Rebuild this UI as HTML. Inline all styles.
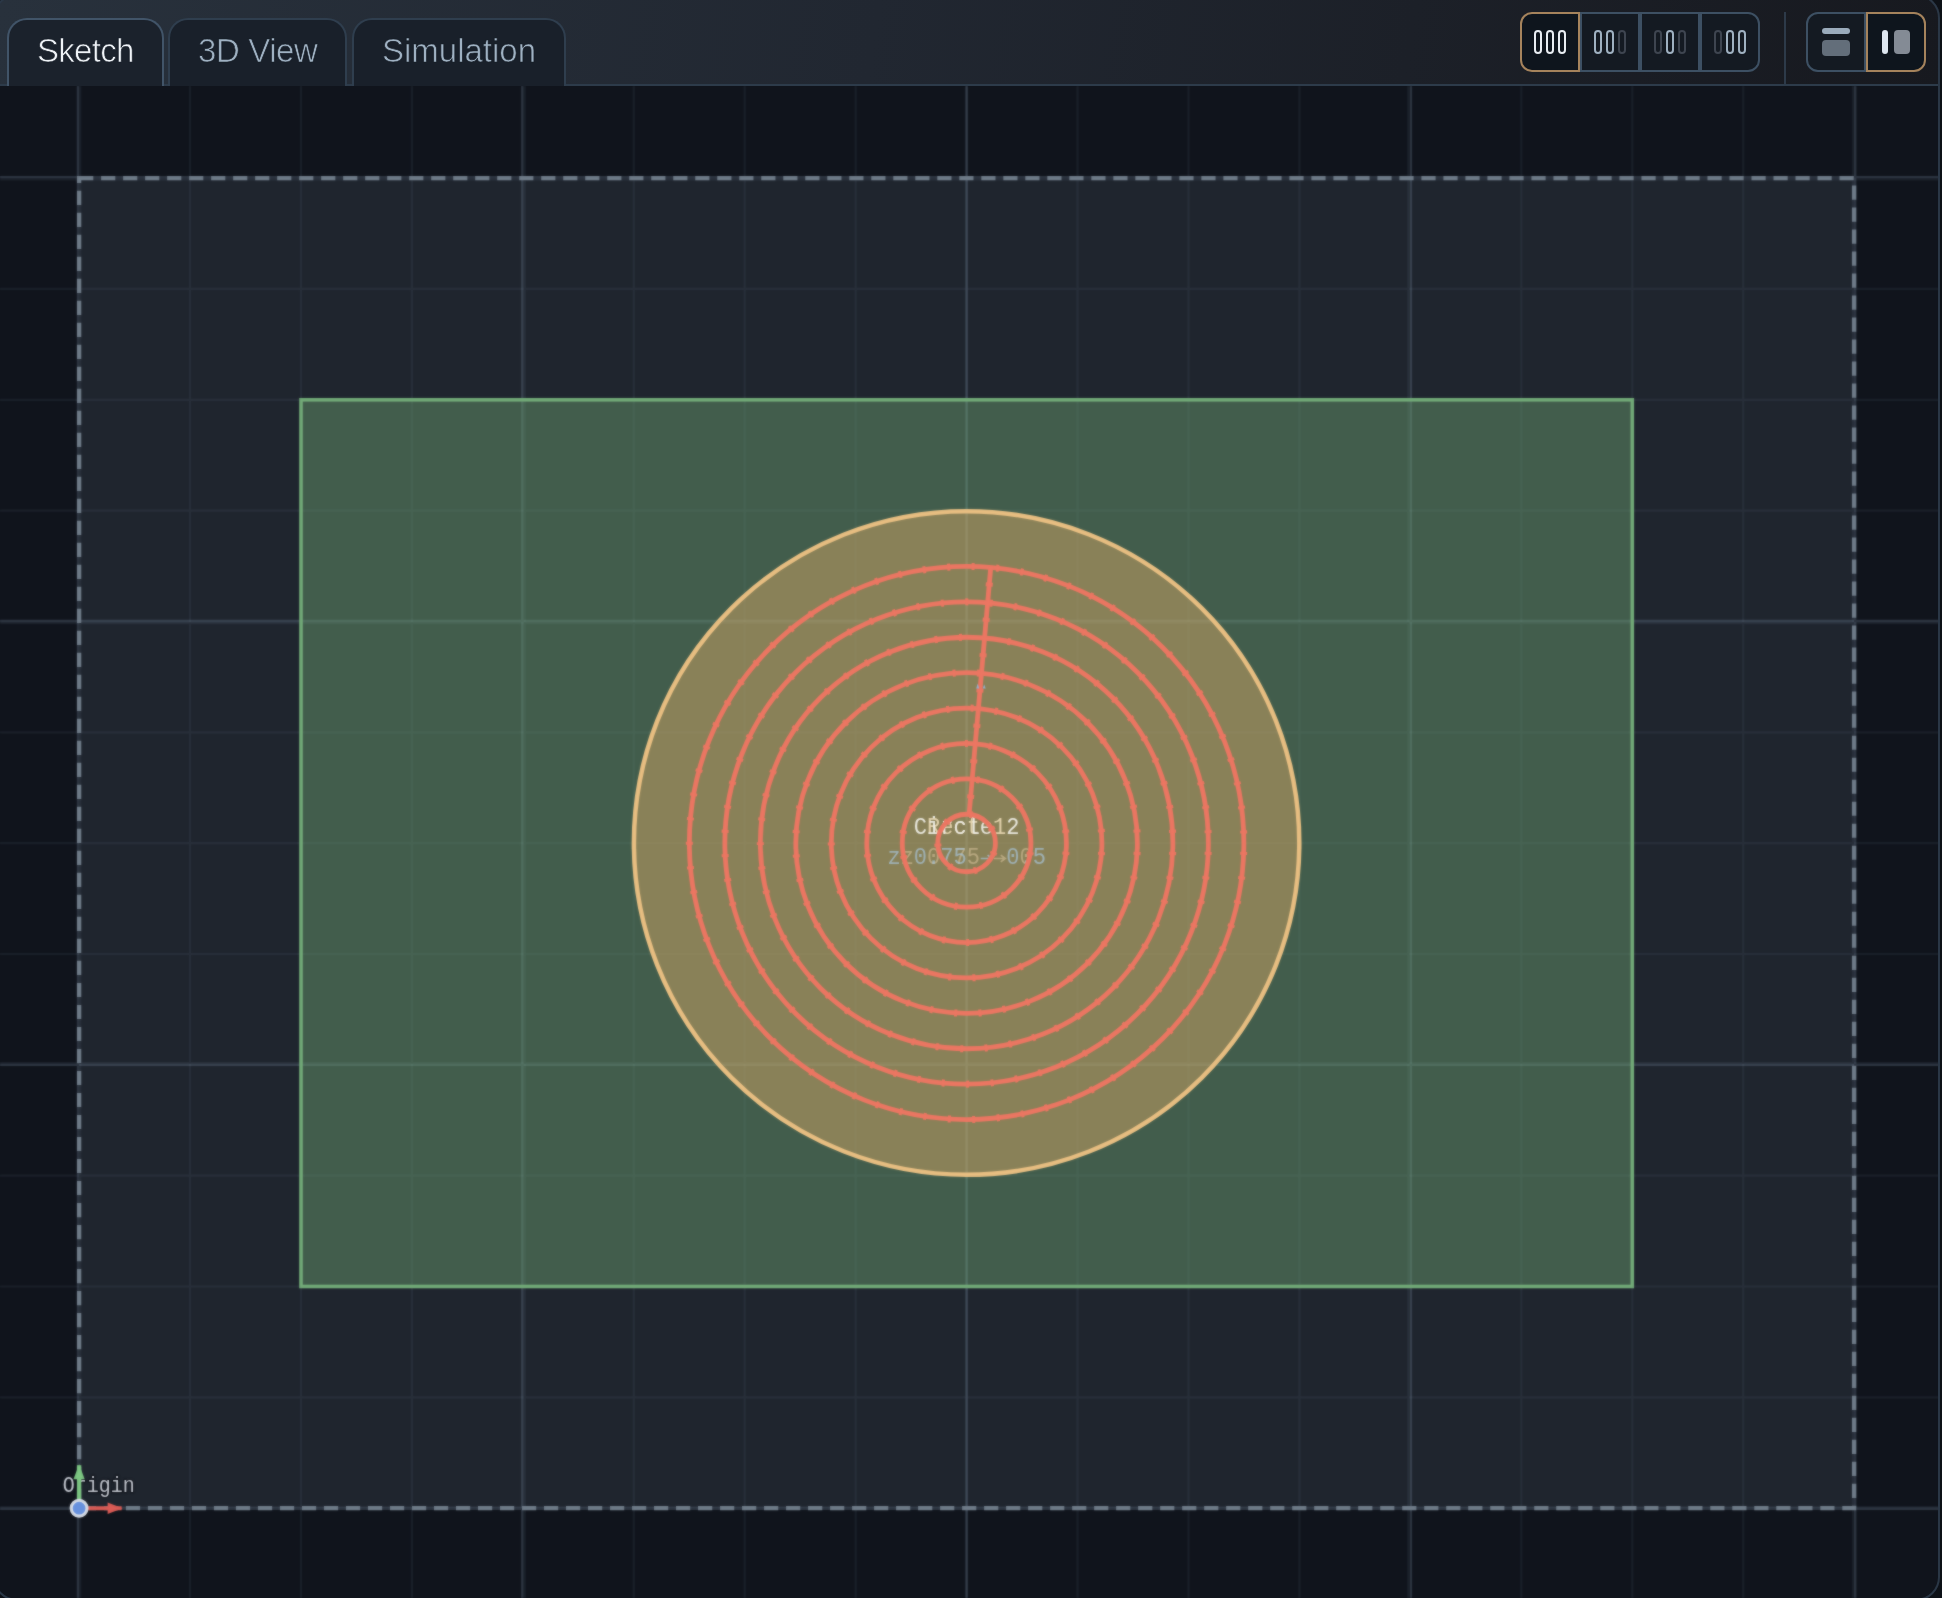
<!DOCTYPE html>
<html><head><meta charset="utf-8"><title>Sketch</title>
<style>
html,body{margin:0;padding:0;overflow:hidden;background:#10141c;}
#root{width:1942px;height:1598px;overflow:hidden;background:#10141c;font-family:"Liberation Sans",sans-serif;position:relative;}
#frame{position:absolute;left:-7px;top:-6px;width:1947px;height:1607px;box-sizing:border-box;border:2px solid #2a3746;border-radius:24px;box-shadow:0 0 0 30px #0d1117;pointer-events:none;z-index:9;}
#hdr{position:absolute;left:0;top:0;width:1940px;height:84px;background:linear-gradient(99deg,#28313c 0%,#212731 45%,#17191f 100%);border-bottom:2px solid #2d3b4a;}
#cv{position:absolute;left:0;top:86px;display:block;will-change:transform;}
.tab{position:absolute;top:18px;height:68px;box-sizing:border-box;border:2px solid #2f3e4e;border-bottom:none;border-radius:20px 20px 0 0;background:#19202a;color:#9eb0c1;font-size:33px;line-height:62px;text-align:center;white-space:nowrap;}
.tab span{display:inline-block;will-change:transform;-webkit-text-stroke:0.7px #19202a;}
.tab.act span{-webkit-text-stroke:0.7px #1b222c;}
.tab.act{border-color:#415468;background:#1b222c;color:#eef2f6;}
.grp{position:absolute;top:12px;height:60px;box-sizing:border-box;display:flex;}
.btn{width:60px;height:60px;box-sizing:border-box;border:2px solid #3d5063;background:#141a22;display:flex;align-items:center;justify-content:center;}
.btn.first{border-radius:12px 0 0 12px;}
.btn.last{border-radius:0 12px 12px 0;}
.btn.act{border-color:#a5835c;background:#0e151d;}
.sep{position:absolute;left:1784px;top:12px;width:2px;height:72px;background:#2d3a49;}
</style></head><body><div id="root">
<svg id="cv" width="1942" height="1512" viewBox="0 86 1942 1512"><defs><filter id="sf" x="-10" y="70" width="1962" height="1540" filterUnits="userSpaceOnUse" color-interpolation-filters="sRGB"><feGaussianBlur stdDeviation="0.9"/></filter></defs><rect x="0" y="86" width="1942" height="1512" fill="#10141c"/><defs><g id="c"><rect x="-20" y="66" width="1982" height="1552" fill="#10141c"/><rect x="79.1" y="178.1" width="1775.0" height="1330.1" fill="#1f252e"/><path d="M80.3 86V1598M190.0 86V1598M301.0 86V1598M411.9 86V1598M524.8 86V1598M633.8 86V1598M744.7 86V1598M855.7 86V1598M966.6 86V1598M1077.6 86V1598M1188.5 86V1598M1299.4 86V1598M1408.2 86V1598M1521.3 86V1598M1632.3 86V1598M1743.2 86V1598M1852.9 86V1598M0 179.3H1942M0 288.9H1942M0 399.8H1942M0 510.6H1942M0 623.1H1942M0 732.3H1942M0 843.1H1942M0 954.0H1942M0 1063.0H1942M0 1175.7H1942M0 1286.5H1942M0 1397.3H1942M0 1507.0H1942" stroke="#8fa3bd" stroke-opacity="0.085" stroke-width="2.2" fill="none"/><path d="M78.0 86V1598M522.3 86V1598M966.6 86V1598M1410.9 86V1598M1855.2 86V1598M0 177.1H1942M0 621.0H1942M0 1064.9H1942M0 1508.8H1942" stroke="#8fa3bd" stroke-opacity="0.23" stroke-width="2.4" fill="none"/><path d="M79.1 178.1H1854.1V1508.2H79.1Z" fill="none" stroke="#6f7c89" stroke-width="4.3" stroke-dasharray="14.2 7.805"/><rect x="77.1" y="176.1" width="4" height="4" fill="#6f7c89"/><rect x="301.0" y="399.8" width="1331.3" height="886.7" fill="#72ab78" fill-opacity="0.42" stroke="#72ab78" stroke-width="3.6"/><ellipse cx="966.6" cy="843.0" rx="332.7" ry="331.8" fill="#dfac69" fill-opacity="0.45" stroke="#e9bf82" stroke-width="4.5"/><g font-family="Liberation Mono, monospace"><text transform="scale(0.9167,1)" x="1011.3 1025.7 1040.1 1054.5 1083.3" y="833.7" font-size="24" fill="#ead9b4" fill-opacity="0.95">Rect1</text><text transform="scale(0.9167,1)" x="996.9 1011.3 1025.7 1040.1 1054.5 1068.9 1097.7" y="833.7" font-size="24" fill="#f1f0ea" fill-opacity="0.95">Circle2</text><path d="M993.9 858.5H1004.3M1000.8 855.1L1005.3 858.5L1000.8 861.9" fill="none" stroke="#cdbb93" stroke-opacity="0.7" stroke-width="1.7"/><text transform="scale(0.9167,1)" x="982.5 1011.3 1025.7 1040.1 1054.5 1112.1" y="864.0" font-size="24" fill="#cdbb93" fill-opacity="0.7">z0.750</text><path d="M980.7 858.5H991.1M987.6 855.1L992.1 858.5L987.6 861.9" fill="none" stroke="#a9c6dc" stroke-opacity="0.72" stroke-width="1.7"/><text transform="scale(0.9167,1)" x="968.1 996.9 1011.3 1025.7 1040.1 1097.7 1112.1 1126.5" y="864.0" font-size="24" fill="#a9c6dc" fill-opacity="0.72">z0.750.5</text></g><g fill="none" stroke="#ec7662" stroke-width="4.8"><ellipse cx="966.6" cy="843.0" rx="277.25" ry="276.53"/><ellipse cx="966.6" cy="843.0" rx="241.76" ry="241.13"/><ellipse cx="966.6" cy="843.0" rx="206.27" ry="205.74"/><ellipse cx="966.6" cy="843.0" rx="170.79" ry="170.34"/><ellipse cx="966.6" cy="843.0" rx="135.30" ry="134.95"/><ellipse cx="966.6" cy="843.0" rx="99.81" ry="99.55"/><ellipse cx="966.6" cy="843.0" rx="64.32" ry="64.15"/><ellipse cx="966.6" cy="843.0" rx="28.83" ry="28.76"/><path d="M990.8 566.8L969.1 814.3"/></g><g fill="none" stroke="#ec7662" stroke-width="7"><ellipse cx="966.6" cy="843.0" rx="277.25" ry="276.53" stroke-dasharray="3 21.535" stroke-dashoffset="-9"/><ellipse cx="966.6" cy="843.0" rx="241.76" ry="241.13" stroke-dasharray="3 21.501" stroke-dashoffset="-9"/><ellipse cx="966.6" cy="843.0" rx="206.27" ry="205.74" stroke-dasharray="3 21.454" stroke-dashoffset="-9"/><ellipse cx="966.6" cy="843.0" rx="170.79" ry="170.34" stroke-dasharray="3 21.388" stroke-dashoffset="-9"/><ellipse cx="966.6" cy="843.0" rx="135.30" ry="134.95" stroke-dasharray="3 21.289" stroke-dashoffset="-9"/><ellipse cx="966.6" cy="843.0" rx="99.81" ry="99.55" stroke-dasharray="3 21.120" stroke-dashoffset="-9"/><ellipse cx="966.6" cy="843.0" rx="64.32" ry="64.15" stroke-dasharray="3 22.259" stroke-dashoffset="-9"/><ellipse cx="966.6" cy="843.0" rx="28.83" ry="28.76" stroke-dasharray="3 22.881" stroke-dashoffset="-9"/><path d="M990.8 566.8L969.1 814.3" stroke-dasharray="4 31.49" stroke-dashoffset="-15.74"/></g><path d="M976.2 688.6l1.5 -5l1.5 5zM982.7 688.6l1.5 -4l1.5 4z" fill="#8fb0d0"/><text transform="scale(0.909,1)" x="69.0" y="1491.7" font-family="Liberation Mono, monospace" font-size="22" fill="#c8ccd4" stroke="#10141c" stroke-width="3" paint-order="stroke" stroke-linejoin="round">Origin</text><path d="M79.1 1508.2V1465.2" stroke="#7cc682" stroke-width="4.4"/><path d="M73.5 1479.2L79.1 1464.2L84.7 1479.2Z" fill="#7cc682"/><path d="M79.1 1508.2H121.6" stroke="#d95b55" stroke-width="4"/><path d="M107.6 1502.4L122.6 1508.2L107.6 1514.0Z" fill="#d95b55"/><circle cx="79.1" cy="1508.2" r="7.9" fill="#6791dd" stroke="#d6dce6" stroke-width="3.1"/></g></defs><use href="#c" filter="url(#sf)"/><use href="#c" opacity="0.45"/></svg>
<div id="hdr">
<div class="tab act" style="left:7px;width:157px;"><span style="letter-spacing:-0.7px">Sketch</span></div>
<div class="tab" style="left:168px;width:179px;"><span style="letter-spacing:-0.4px">3D View</span></div>
<div class="tab" style="left:352px;width:214px;"><span style="letter-spacing:0px">Simulation</span></div>
<div class="grp" style="left:1520px;">
<div class="btn first act"><svg width="36" height="36" viewBox="0 0 36 36" fill="none" stroke-width="2"><rect x="3" y="7" width="6" height="22" rx="3" stroke="#e8edf2"/><rect x="15" y="7" width="6" height="22" rx="3" stroke="#e8edf2"/><rect x="27" y="7" width="6" height="22" rx="3" stroke="#e8edf2"/></svg></div>
<div class="btn"><svg width="36" height="36" viewBox="0 0 36 36" fill="none" stroke-width="2"><rect x="3" y="7" width="6" height="22" rx="3" stroke="#9fb1c1"/><rect x="15" y="7" width="6" height="22" rx="3" stroke="#9fb1c1"/><rect x="27" y="7" width="6" height="22" rx="3" stroke="#3e4550"/></svg></div>
<div class="btn"><svg width="36" height="36" viewBox="0 0 36 36" fill="none" stroke-width="2"><rect x="3" y="7" width="6" height="22" rx="3" stroke="#3e4550"/><rect x="15" y="7" width="6" height="22" rx="3" stroke="#9fb1c1"/><rect x="27" y="7" width="6" height="22" rx="3" stroke="#3e4550"/></svg></div>
<div class="btn last"><svg width="36" height="36" viewBox="0 0 36 36" fill="none" stroke-width="2"><rect x="3" y="7" width="6" height="22" rx="3" stroke="#3e4550"/><rect x="15" y="7" width="6" height="22" rx="3" stroke="#9fb1c1"/><rect x="27" y="7" width="6" height="22" rx="3" stroke="#9fb1c1"/></svg></div>
</div>
<div class="sep"></div>
<div class="grp" style="left:1806px;">
<div class="btn first"><svg width="28" height="28" viewBox="0 0 28 28"><rect x="0" y="0" width="28" height="6" rx="3" fill="#9aabbb"/><rect x="0" y="12" width="28" height="16" rx="4" fill="#636e7a"/></svg></div>
<div class="btn last act"><svg width="28" height="24" viewBox="0 0 28 24"><rect x="0" y="0" width="6" height="24" rx="3" fill="#dde6ef"/><rect x="12" y="0" width="16" height="24" rx="4" fill="#848b95"/></svg></div>
</div>
</div>
<div id="frame"></div>
</div></body></html>
